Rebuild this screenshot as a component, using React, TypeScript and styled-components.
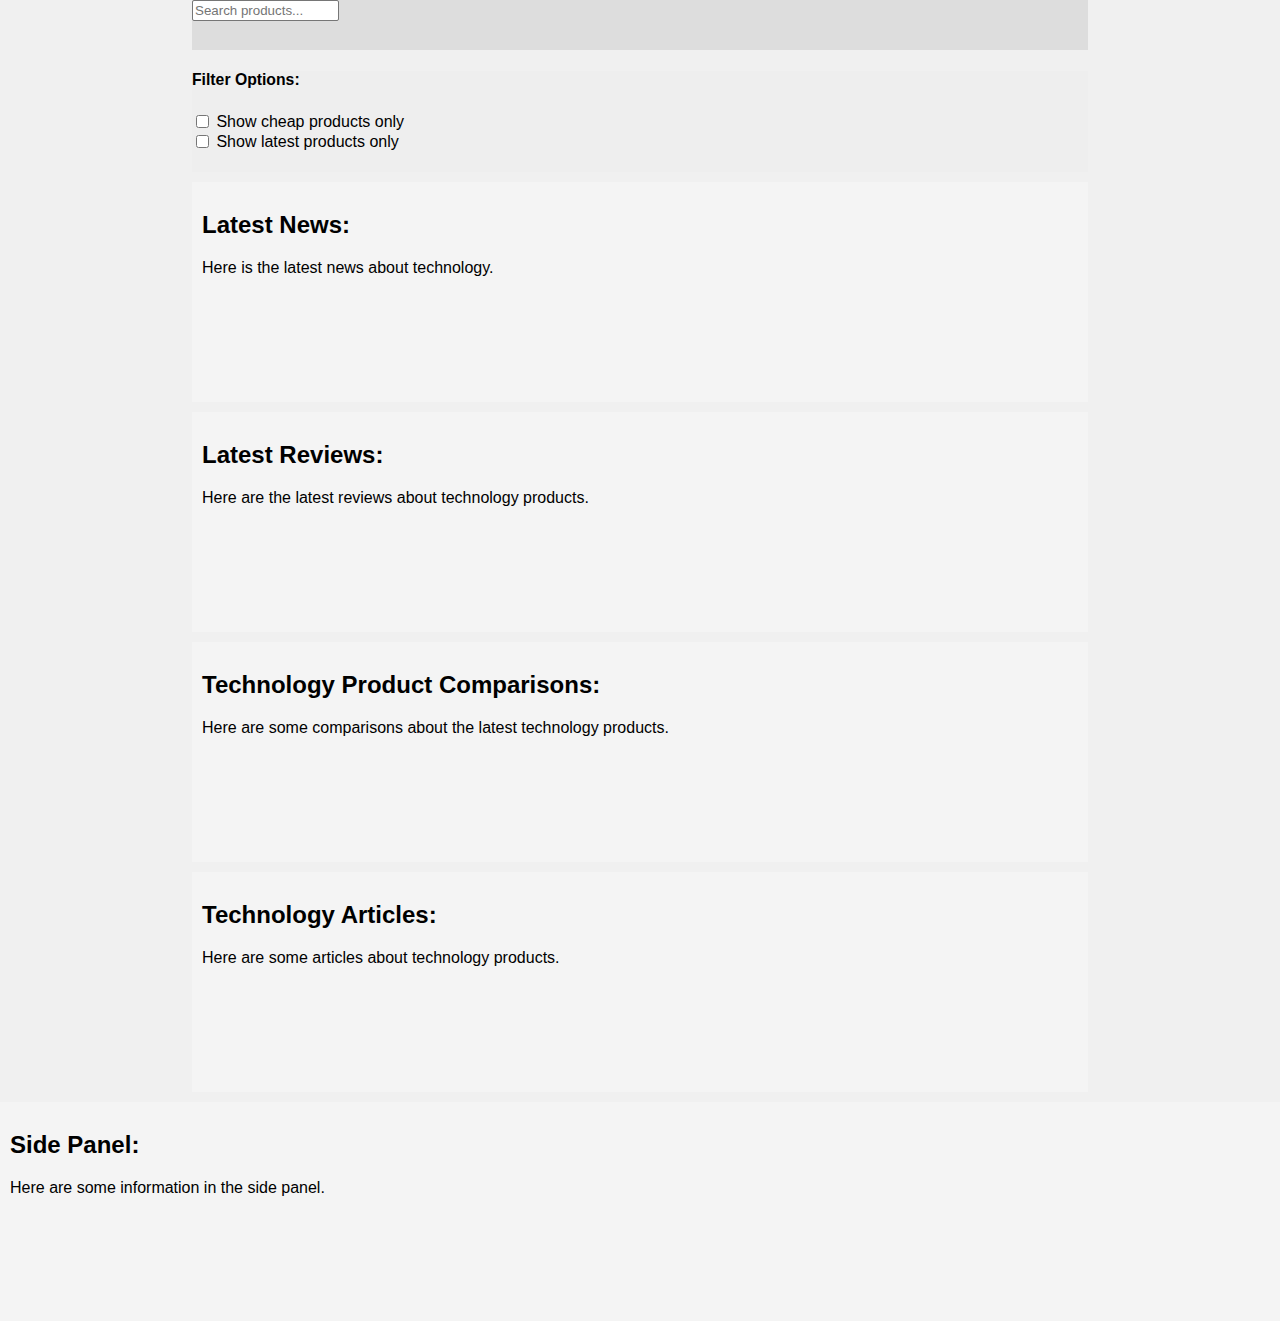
import React from "react";
import styled, { createGlobalStyle } from "styled-components";

const GlobalStyle = createGlobalStyle`
  html, body {
    margin: 0;
    padding: 0;
    background: #f0f0f0;
    font-family: "Liberation Sans", Arial, sans-serif;
    color: #000;
  }
`;

const Main = styled.main`
  width: 70%;
  margin: 0 auto;
`;

const Header = styled.header`
  height: 50px;
  background: #dddddd;
  margin-bottom: 21px;
`;

const SearchInput = styled.input`
  display: block;
  box-sizing: border-box;
  width: 147px;
  height: 21px;
  margin: 0;
  padding: 1px 2px;
  border: 1px solid #767676;
  border-radius: 2px;
  background: #fff;
  font: 13.333px "Liberation Sans", Arial, sans-serif;
  &::placeholder {
    color: #757575;
  }
`;

const Filter = styled.div`
  background: #eeeeee;
  padding: 0 0 20px;
  margin-bottom: 10px;
`;

const FilterTitle = styled.div`
  font-size: 15.75px;
  font-weight: bold;
  line-height: 18px;
  margin-bottom: 23px;
`;

const Option = styled.label`
  display: block;
  font-size: 16px;
  line-height: 20px;
  height: 20px;
`;

const Check = styled.input`
  width: 13px;
  height: 13px;
  margin: 3px 3px 3px 4px;
  vertical-align: -1px;
`;

const Section = styled.section<{ $full?: boolean }>`
  background: #f4f4f4;
  height: 200px;
  padding: 10px;
  margin-bottom: ${(p) => (p.$full ? "0" : "10px")};
  overflow: hidden;
`;

const Title = styled.h2`
  font-size: 24px;
  font-weight: bold;
  margin: 19px 0 19.92px;
`;

const Text = styled.p`
  font-size: 16px;
  margin: 16px 0;
`;

const sections = [
  { title: "Latest News:", text: "Here is the latest news about technology." },
  { title: "Latest Reviews:", text: "Here are the latest reviews about technology products." },
  {
    title: "Technology Product Comparisons:",
    text: "Here are some comparisons about the latest technology products.",
  },
  { title: "Technology Articles:", text: "Here are some articles about technology products." },
];

export default function App() {
  return (
    <>
      <GlobalStyle />
      <Main>
        <Header>
          <SearchInput type="text" placeholder="Search products..." />
        </Header>
        <Filter>
          <FilterTitle>Filter Options:</FilterTitle>
          <Option>
            <Check type="checkbox" /> Show cheap products only
          </Option>
          <Option>
            <Check type="checkbox" /> Show latest products only
          </Option>
        </Filter>
        {sections.map((s) => (
          <Section key={s.title}>
            <Title>{s.title}</Title>
            <Text>{s.text}</Text>
          </Section>
        ))}
      </Main>
      <Section as="aside" $full>
        <Title>Side Panel:</Title>
        <Text>Here are some information in the side panel.</Text>
      </Section>
    </>
  );
}
